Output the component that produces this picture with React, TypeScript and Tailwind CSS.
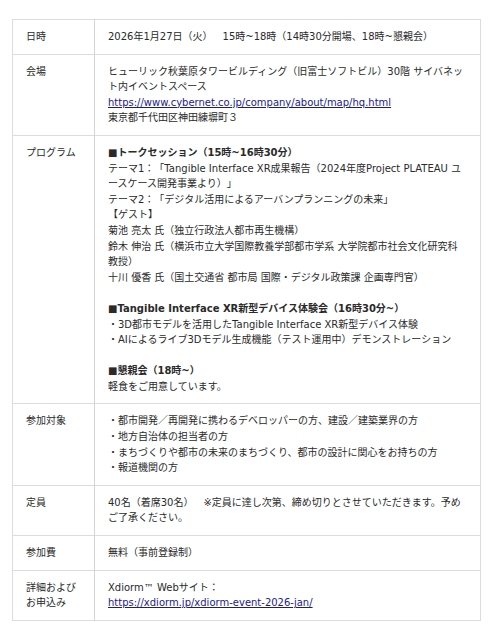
const rows: { label: string; body: React.ReactNode }[] = [
  {
    label: '日時',
    body: <>2026年1月27日（火）{'\u3000'}15時~18時（14時30分開場、18時~懇親会）</>,
  },
  {
    label: '会場',
    body: (
      <>
        ヒューリック秋葉原タワービルディング（旧富士ソフトビル）30階 サイバネット内イベントスペース
        <br />
        <a href="#" className="text-[#1c1a8a] underline">
          https://www.cybernet.co.jp/company/about/map/hq.html
        </a>
        <br />
        東京都千代田区神田練塀町３
      </>
    ),
  },
  {
    label: 'プログラム',
    body: (
      <>
        <b>■トークセッション（15時~16時30分）</b>
        <br />
        テーマ1：「Tangible Interface XR成果報告（2024年度Project PLATEAU ユースケース開発事業より）」
        <br />
        テーマ2：「デジタル活用によるアーバンプランニングの未来」
        <br />
        【ゲスト】
        <br />
        菊池 亮太 氏（独立行政法人都市再生機構）
        <br />
        鈴木 伸治 氏（横浜市立大学国際教養学部都市学系 大学院都市社会文化研究科教授）
        <br />
        十川 優香 氏（国土交通省 都市局 国際・デジタル政策課 企画専門官）
        <br />
        <br />
        <b>■Tangible Interface XR新型デバイス体験会（16時30分~）</b>
        <br />
        ・3D都市モデルを活用したTangible Interface XR新型デバイス体験
        <br />
        ・AIによるライブ3Dモデル生成機能（テスト運用中）デモンストレーション
        <br />
        <br />
        <b>■懇親会（18時~）</b>
        <br />
        軽食をご用意しています。
      </>
    ),
  },
  {
    label: '参加対象',
    body: (
      <>
        ・都市開発／再開発に携わるデベロッパーの方、建設／建築業界の方
        <br />
        ・地方自治体の担当者の方
        <br />
        ・まちづくりや都市の未来のまちづくり、都市の設計に関心をお持ちの方
        <br />
        ・報道機関の方
      </>
    ),
  },
  {
    label: '定員',
    body: <>40名（着席30名）{'\u3000'}※定員に達し次第、締め切りとさせていただきます。予めご了承ください。</>,
  },
  { label: '参加費', body: <>無料（事前登録制）</> },
  {
    label: '詳細およびお申込み',
    body: (
      <>
        Xdiorm™ Webサイト：
        <br />
        <a href="#" className="text-[#1c1a8a] underline">
          https://xdiorm.jp/xdiorm-event-2026-jan/
        </a>
      </>
    ),
  },
]

export default function App() {
  return (
    <div className="min-h-screen bg-white pl-[12px] pt-[19px] font-['DejaVu_Sans','Noto_Sans_CJK_JP',sans-serif] text-[10px] leading-[15.6px] text-[#2a2a2a] [text-spacing-trim:space-all]">
      <table className="w-[469px] border-collapse border border-[#dcdcdc]">
        <tbody>
          {rows.map((row) => (
            <tr key={row.label} className="border-b border-[#dcdcdc]">
              <td className="w-[82px] border-r border-[#d4d4d4] px-[13px] py-[9px] align-top">
                {row.label}
              </td>
              <td className="px-[13px] py-[9px] align-top">{row.body}</td>
            </tr>
          ))}
        </tbody>
      </table>
    </div>
  )
}
